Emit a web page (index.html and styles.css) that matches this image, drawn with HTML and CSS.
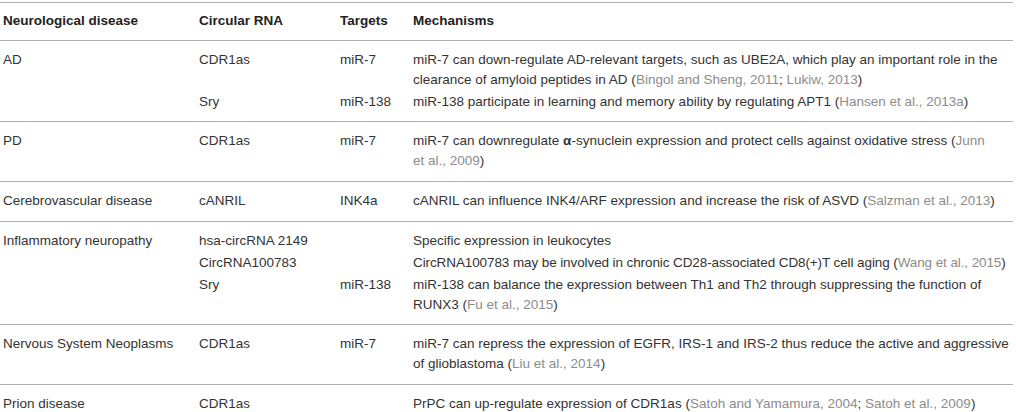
FILE: index.html
```html
<!DOCTYPE html>
<html>
<head>
<meta charset="utf-8">
<link rel="stylesheet" href="styles.css">
</head>
<body>
<table class="tbl">
  <colgroup>
    <col class="c1"><col class="c2"><col class="c3"><col class="c4">
  </colgroup>
  <thead>
    <tr><th>Neurological disease</th><th>Circular RNA</th><th>Targets</th><th>Mechanisms</th></tr>
  </thead>
  <tbody>
    <tr class="first"><td>AD</td><td>CDR1as</td><td>miR-7</td><td>miR-7 can down-regulate AD-relevant targets, such as UBE2A, which play an important role in the clearance of amyloid peptides in AD (<span class="ref">Bingol and Sheng, 2011</span>; <span class="ref">Lukiw, 2013</span>)</td></tr>
    <tr class="last"><td></td><td>Sry</td><td>miR-138</td><td>miR-138 participate in learning and memory ability by regulating APT1 (<span class="ref">Hansen et al., 2013a</span>)</td></tr>
  </tbody>
  <tbody>
    <tr class="first last"><td>PD</td><td>CDR1as</td><td>miR-7</td><td>miR-7 can downregulate <span class="greek">α</span>-synuclein expression and protect cells against oxidative stress (<span class="ref">Junn et&nbsp;al., 2009</span>)</td></tr>
  </tbody>
  <tbody>
    <tr class="first last"><td>Cerebrovascular disease</td><td>cANRIL</td><td>INK4a</td><td>cANRIL can influence INK4/ARF expression and increase the risk of ASVD (<span class="ref">Salzman et al., 2013</span>)</td></tr>
  </tbody>
  <tbody>
    <tr class="first"><td>Inflammatory neuropathy</td><td>hsa-circRNA 2149</td><td></td><td>Specific expression in leukocytes</td></tr>
    <tr class="mid"><td></td><td>CircRNA100783</td><td></td><td class="nowrap">CircRNA100783 may be involved in chronic CD28-associated CD8(+)T cell aging (<span class="ref">Wang et al., 2015</span>)</td></tr>
    <tr class="last"><td></td><td>Sry</td><td>miR-138</td><td>miR-138 can balance the expression between Th1 and Th2 through suppressing the function of RUNX3 (<span class="ref">Fu et al., 2015</span>)</td></tr>
  </tbody>
  <tbody>
    <tr class="first last"><td>Nervous System Neoplasms</td><td>CDR1as</td><td>miR-7</td><td>miR-7 can repress the expression of EGFR, IRS-1 and IRS-2 thus reduce the active and aggressive of glioblastoma (<span class="ref">Liu et al., 2014</span>)</td></tr>
  </tbody>
  <tbody>
    <tr class="first last"><td>Prion disease</td><td>CDR1as</td><td></td><td>PrPC can up-regulate expression of CDR1as (<span class="ref">Satoh and Yamamura, 2004</span>; <span class="ref">Satoh et al., 2009</span>)</td></tr>
  </tbody>
</table>
</body>
</html>
```

FILE: styles.css
```css
html, body {
  margin: 0;
  padding: 0;
  background: #ffffff;
}
body {
  font-family: "Liberation Sans", Arial, Helvetica, sans-serif;
  font-size: 13.5px;
  color: #333333;
}
.tbl {
  margin-top: 2px;
  width: 1013px;
  border-collapse: collapse;
  table-layout: fixed;
  border-top: 1px solid #b0b0b0;
}
.c1 { width: 196px; }
.c2 { width: 141px; }
.c3 { width: 73px; }
.c4 { width: 603px; }
.tbl th {
  text-align: left;
  font-weight: bold;
  color: #222222;
  font-size: 13.5px;
  line-height: 20px;
  padding: 8px 3px 9px 3px;
  border-bottom: 1px solid #b0b0b0;
}
.tbl td {
  vertical-align: top;
  line-height: 20px;
  padding: 1px 3px 1px 3px;
}
.tbl td:last-child {
  padding-right: 0;
}
.tbl td.nowrap {
  white-space: nowrap;
  letter-spacing: -0.1px;
}
.tbl tbody {
  border-bottom: 1px solid #b0b0b0;
}
.tbl tbody:last-child {
  border-bottom: none;
}
.tbl tr.first td { padding-top: 9px; }
.tbl tr.last td { padding-bottom: 9px; }
.tbl tr.first.last td { padding-bottom: 10px; }
.ref { color: #8c8c8c; }
.greek { font-weight: bold; }
```
